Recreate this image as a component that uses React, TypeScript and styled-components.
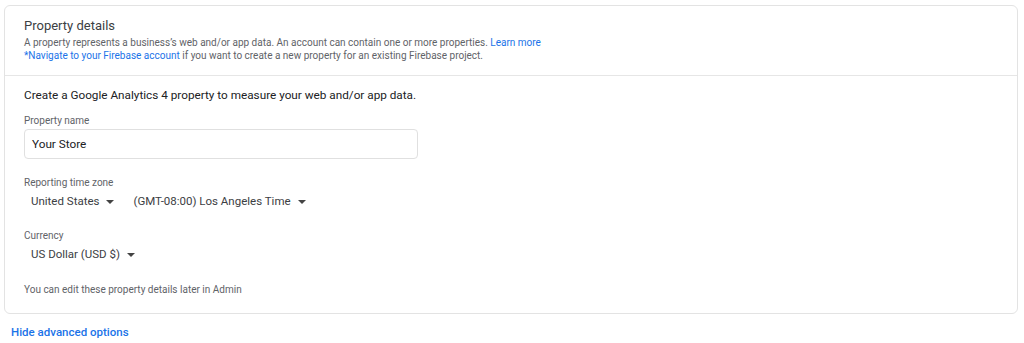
import React from 'react';
import styled, { createGlobalStyle } from 'styled-components';

const GlobalStyle = createGlobalStyle`
  html, body {
    margin: 0;
    padding: 0;
    background: #ffffff;
    font-family: Roboto, "Liberation Sans", Arial, sans-serif;
  }
`;

const Page = styled.div`
  padding: 5px 6px 0 4px;
`;

const Card = styled.section`
  border: 1px solid #e3e3e3;
  border-radius: 6px;
  background: #fff;
`;

const Header = styled.div`
  padding: 11px 19px 13px;
  border-bottom: 1px solid #e6e6e6;
`;

const Title = styled.h2`
  margin: 0 0 2px;
  font-size: 13px;
  font-weight: 400;
  color: #3c4043;
  line-height: 17px;
`;

const Desc = styled.p`
  margin: 0;
  font-size: 10px;
  line-height: 13px;
  color: #5f6368;
`;

const Link = styled.a`
  color: #1a73e8;
  text-decoration: none;
  cursor: pointer;
`;

const Body = styled.div`
  padding: 11px 19px 17px;
`;

const Intro = styled.p`
  margin: 0 0 11px;
  font-size: 11.75px;
  line-height: 16px;
  color: #202124;
`;

const Label = styled.div`
  font-size: 10px;
  line-height: 13px;
  color: #5f6368;
  margin-bottom: 2px;
`;

const Field = styled.div<{ $gap?: number }>`
  margin-bottom: ${(p) => p.$gap ?? 0}px;
`;

const Input = styled.div`
  box-sizing: border-box;
  width: 394px;
  height: 30px;
  border: 1px solid #e0e0e0;
  border-radius: 4px;
  padding: 0 7px;
  display: flex;
  align-items: center;
  font-size: 11.75px;
  color: #202124;
`;

const SelectRow = styled.div`
  display: flex;
  align-items: center;
  gap: 19px;
  padding-left: 7px;
  height: 20px;
`;

const Select = styled.div`
  display: flex;
  align-items: center;
  gap: 7px;
  font-size: 11.5px;
  color: #3c4043;
  cursor: pointer;
`;

const Caret = styled.span`
  width: 0;
  height: 0;
  border-left: 4px solid transparent;
  border-right: 4px solid transparent;
  border-top: 4px solid #444;
  margin-top: 1px;
`;

const Note = styled.p`
  margin: 0;
  font-size: 10px;
  line-height: 13px;
  color: #5f6368;
`;

const Toggle = styled.a`
  display: inline-block;
  margin: 12px 0 0 7px;
  font-size: 11.5px;
  line-height: 13px;
  font-weight: 500;
  color: #1a73e8;
  cursor: pointer;
`;

const Dropdown: React.FC<{ children: React.ReactNode }> = ({ children }) => (
  <Select>
    {children}
    <Caret />
  </Select>
);

export default function App() {
  return (
    <Page>
      <GlobalStyle />
      <Card>
        <Header>
          <Title>Property details</Title>
          <Desc>
            A property represents a business’s web and/or app data. An account can contain one or more properties.{' '}
            <Link>Learn more</Link>
          </Desc>
          <Desc>
            <Link>*Navigate to your Firebase account</Link> if you want to create a new property for an existing Firebase project.
          </Desc>
        </Header>
        <Body>
          <Intro>Create a Google Analytics 4 property to measure your web and/or app data.</Intro>
          <Field $gap={17}>
            <Label>Property name</Label>
            <Input>Your Store</Input>
          </Field>
          <Field $gap={18}>
            <Label>Reporting time zone</Label>
            <SelectRow>
              <Dropdown>United States</Dropdown>
              <Dropdown>(GMT-08:00) Los Angeles Time</Dropdown>
            </SelectRow>
          </Field>
          <Field $gap={19}>
            <Label>Currency</Label>
            <SelectRow>
              <Dropdown>US Dollar (USD $)</Dropdown>
            </SelectRow>
          </Field>
          <Note>You can edit these property details later in Admin</Note>
        </Body>
      </Card>
      <Toggle>Hide advanced options</Toggle>
    </Page>
  );
}
